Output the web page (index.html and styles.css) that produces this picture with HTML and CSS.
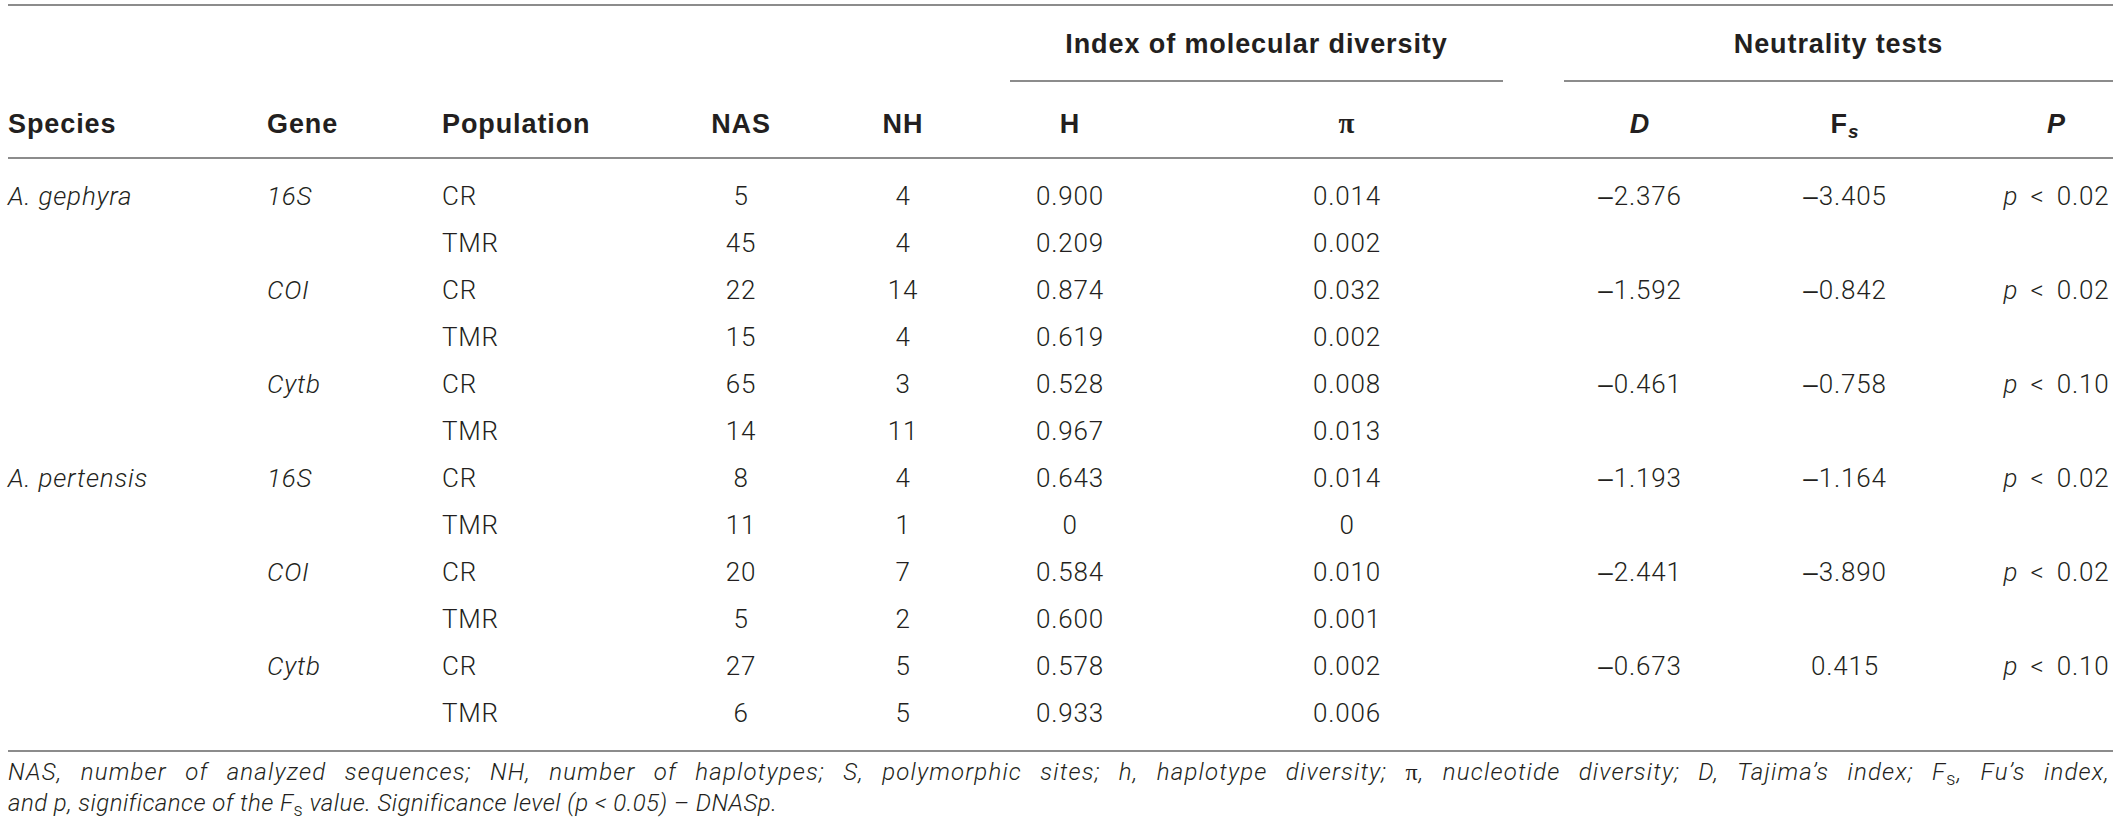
FILE: index.html
```html
<!DOCTYPE html>
<html lang="en">
<head>
<meta charset="utf-8">
<title>Table</title>
<link rel="stylesheet" href="styles.css">
</head>
<body>
<div class="page">
<table class="tbl">
<colgroup>
<col class="c-species"><col class="c-gene"><col class="c-pop"><col class="c-nas"><col class="c-nh"><col class="c-h"><col class="c-pi"><col class="c-d"><col class="c-fs"><col class="c-p">
</colgroup>
<thead>
<tr class="grp-row">
<th colspan="5" class="grp-empty"></th>
<th colspan="2" class="grp-cell"><div class="grp grp-index">Index of molecular diversity</div></th>
<th colspan="3" class="grp-cell"><div class="grp grp-neutral">Neutrality tests</div></th>
</tr>
<tr class="head-row">
<th class="l">Species</th><th class="l">Gene</th><th class="l">Population</th><th>NAS</th><th>NH</th><th>H</th><th><span class="pi-h">π</span></th><th><i>D</i></th><th>F<span class="sub-h">s</span></th><th class="pcol"><i>P</i></th>
</tr>
</thead>
<tbody>
<tr><td class="l"><i>A. gephyra</i></td><td class="l"><i>16S</i></td><td class="l">CR</td><td>5</td><td>4</td><td>0.900</td><td>0.014</td><td><span class="neg">–</span>2.376</td><td><span class="neg">–</span>3.405</td><td class="pcol"><i>p</i> &lt; 0.02</td></tr>
<tr><td class="l"></td><td class="l"></td><td class="l">TMR</td><td>45</td><td>4</td><td>0.209</td><td>0.002</td><td></td><td></td><td class="pcol"></td></tr>
<tr><td class="l"></td><td class="l"><i>COI</i></td><td class="l">CR</td><td>22</td><td>14</td><td>0.874</td><td>0.032</td><td><span class="neg">–</span>1.592</td><td><span class="neg">–</span>0.842</td><td class="pcol"><i>p</i> &lt; 0.02</td></tr>
<tr><td class="l"></td><td class="l"></td><td class="l">TMR</td><td>15</td><td>4</td><td>0.619</td><td>0.002</td><td></td><td></td><td class="pcol"></td></tr>
<tr><td class="l"></td><td class="l"><i>Cytb</i></td><td class="l">CR</td><td>65</td><td>3</td><td>0.528</td><td>0.008</td><td><span class="neg">–</span>0.461</td><td><span class="neg">–</span>0.758</td><td class="pcol"><i>p</i> &lt; 0.10</td></tr>
<tr><td class="l"></td><td class="l"></td><td class="l">TMR</td><td>14</td><td>11</td><td>0.967</td><td>0.013</td><td></td><td></td><td class="pcol"></td></tr>
<tr><td class="l"><i>A. pertensis</i></td><td class="l"><i>16S</i></td><td class="l">CR</td><td>8</td><td>4</td><td>0.643</td><td>0.014</td><td><span class="neg">–</span>1.193</td><td><span class="neg">–</span>1.164</td><td class="pcol"><i>p</i> &lt; 0.02</td></tr>
<tr><td class="l"></td><td class="l"></td><td class="l">TMR</td><td>11</td><td>1</td><td>0</td><td>0</td><td></td><td></td><td class="pcol"></td></tr>
<tr><td class="l"></td><td class="l"><i>COI</i></td><td class="l">CR</td><td>20</td><td>7</td><td>0.584</td><td>0.010</td><td><span class="neg">–</span>2.441</td><td><span class="neg">–</span>3.890</td><td class="pcol"><i>p</i> &lt; 0.02</td></tr>
<tr><td class="l"></td><td class="l"></td><td class="l">TMR</td><td>5</td><td>2</td><td>0.600</td><td>0.001</td><td></td><td></td><td class="pcol"></td></tr>
<tr><td class="l"></td><td class="l"><i>Cytb</i></td><td class="l">CR</td><td>27</td><td>5</td><td>0.578</td><td>0.002</td><td><span class="neg">–</span>0.673</td><td>0.415</td><td class="pcol"><i>p</i> &lt; 0.10</td></tr>
<tr><td class="l"></td><td class="l"></td><td class="l">TMR</td><td>6</td><td>5</td><td>0.933</td><td>0.006</td><td></td><td></td><td class="pcol"></td></tr>
</tbody>
</table>
<div class="note">
<p class="note-line note-just">NAS, number of analyzed sequences; NH, number of haplotypes; S, polymorphic sites; h, haplotype diversity; <span class="pi-n">π</span>, nucleotide diversity; D, Tajima’s index; F<span class="sub-n">s</span>, Fu’s index,</p>
<p class="note-line">and p, significance of the F<span class="sub-n">s</span> value. Significance level (p &lt; 0.05) – DNASp.</p>
</div>
</div>
</body>
</html>
```

FILE: styles.css
```css
html, body {
  margin: 0;
  padding: 0;
  background: #ffffff;
}

body {
  font-family: "Roboto", "Liberation Sans", sans-serif;
  color: #231f20;
}

.page {
  padding: 4px 7px 0 8px;
  width: 2105px;
}

.tbl {
  width: 2105px;
  table-layout: fixed;
  border-collapse: separate;
  border-spacing: 0;
  border-top: 2px solid #8c8c8c;
  border-bottom: 2px solid #8c8c8c;
}

.c-species { width: 259px; }
.c-gene { width: 175px; }
.c-pop { width: 244px; }
.c-nas { width: 110px; }
.c-nh { width: 214px; }
.c-h { width: 120px; }
.c-pi { width: 434px; }
.c-d { width: 152px; }
.c-fs { width: 258px; }
.c-p { width: 139px; }

th {
  font-family: "Liberation Sans", Arial, sans-serif;
  font-weight: 700;
  font-size: 27px;
  letter-spacing: 0.9px;
  line-height: 24px;
  padding: 0;
  text-align: center;
  white-space: nowrap;
}

.grp-cell {
  vertical-align: top;
}

.grp {
  padding: 26px 0 24px;
  border-bottom: 2px solid #8c8c8c;
}

.grp-index {
  width: 493px;
}

.head-row th {
  padding: 29px 0 21px;
  border-bottom: 2px solid #8c8c8c;
}

.pi-h {
  font-family: "Liberation Serif", serif;
  font-weight: 700;
  font-size: 29px;
}

.sub-h {
  font-style: italic;
  font-size: 19px;
  line-height: 0;
  vertical-align: -5px;
}

td {
  font-size: 26px;
  font-weight: 300;
  letter-spacing: 0.8px;
  line-height: 47px;
  padding: 0;
  text-align: center;
  white-space: nowrap;
}

.neg {
  font-family: "Liberation Sans", Arial, sans-serif;
  font-weight: 400;
  letter-spacing: 0;
  margin-right: 1px;
}

.l {
  text-align: left;
}

th.pcol, td.pcol {
  padding-left: 26px;
}

td.pcol {
  word-spacing: 5px;
}

tbody tr:first-child td {
  padding-top: 14px;
}

tbody tr:last-child td {
  padding-bottom: 13px;
}

.note {
  width: 2102px;
  margin-top: 5px;
  font-style: italic;
  font-weight: 300;
  font-size: 24px;
  line-height: 31px;
}

.note-line {
  margin: 0;
  white-space: nowrap;
  letter-spacing: 0.45px;
}

.note-just {
  white-space: normal;
  letter-spacing: 1.2px;
  text-align: justify;
  text-align-last: justify;
}

.pi-n {
  font-family: "Liberation Serif", serif;
  font-style: normal;
  font-weight: 400;
}

.sub-n {
  font-style: normal;
  font-size: 18px;
  line-height: 0;
  vertical-align: -5px;
}
```
